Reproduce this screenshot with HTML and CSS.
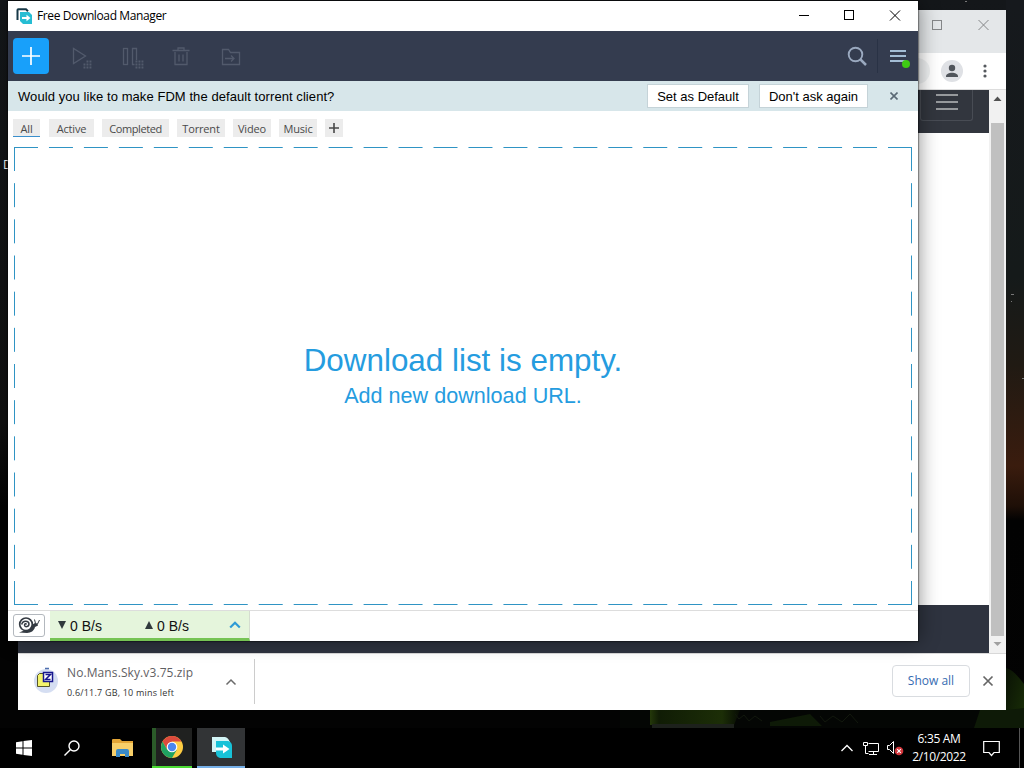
FILE: index.html
```html
<!DOCTYPE HTML>
<html lang="en">
<head>
	<meta charset="UTF-8">
	<title>Free Download Manager</title>
	<link rel="stylesheet" href="styles.css">
</head>
<body>
<div class="desktop">
	<span class="desktop-label">D</span>
	<svg class="wallpaper" width="1024" height="728" viewBox="0 0 1024 728">
		<defs>
			<linearGradient id="glow" x1="0" y1="0" x2="0" y2="1">
				<stop offset="0" stop-color="#16191d"/>
				<stop offset=".38" stop-color="#151a1a"/>
				<stop offset=".5" stop-color="#201a13"/>
				<stop offset=".64" stop-color="#3a1c0e"/>
				<stop offset=".695" stop-color="#1e0f07"/>
				<stop offset=".715" stop-color="#020202"/>
				<stop offset="1" stop-color="#030303"/>
			</linearGradient>
			<linearGradient id="grass" x1="0" y1="0" x2="1" y2="0">
				<stop offset="0" stop-color="#24380a"/>
				<stop offset=".1" stop-color="#101c05"/>
				<stop offset=".8" stop-color="#1c2e07"/>
				<stop offset="1" stop-color="#070c04"/>
			</linearGradient>
			<linearGradient id="leaf" x1="0" y1="0" x2="1" y2="1">
				<stop offset="0" stop-color="#0a1205"/>
				<stop offset="1" stop-color="#1a3007"/>
			</linearGradient>
		</defs>
		<rect x="1006" y="0" width="18" height="728" fill="url(#glow)"/>
		<path d="M1006 668q8 2 18 16v34l-18 10z" fill="url(#leaf)"/>
		<path d="M620 710h404v18H620z" fill="#040604"/>
		<path d="M650 710h90l-6 15h-84z" fill="url(#grass)"/>
		<path d="M652 724h82v4h-82z" fill="#1d211c"/>
		<path d="M770 722l40-8 12 12h-52zM980 710h26l18-2v20h-50z" fill="#0e1a07"/>
		<path d="M735 714l4 5 5-4 5 6 6-5 7 5M820 716l5 6 8-6 9 6 8-8 8 9" fill="none" stroke="#12180d"/>
		<g fill="#777">
			<rect x="1011" y="294" width="3" height="1"/>
			<rect x="1022" y="378" width="2" height="1"/>
			<rect x="1011" y="301" width="1" height="1"/>
			<rect x="965" y="1" width="2" height="1"/>
		</g>
	</svg>

	<div class="window browser">
		<div class="browser-title">
			<svg width="100" height="42" viewBox="0 0 100 42" fill="none" stroke="#858789">
				<rect x="26.500" y="10.500" width="9" height="9"/>
				<path d="M72.500 10l10 10M82.500 10l-10 10"/>
			</svg>
		</div>
		<div class="browser-bar">
			<span class="address-end"></span>
			<span class="avatar">
				<svg width="22" height="22" viewBox="0 0 22 22" fill="#50555b">
					<circle cx="11" cy="8" r="3.200"/>
					<path d="M5 16.500c0-5 12-5 12 0v.5H5z"/>
				</svg>
			</span>
			<svg width="6" height="16" viewBox="0 0 6 16" fill="#55595e">
				<circle cx="3" cy="3" r="1.600"/>
				<circle cx="3" cy="8" r="1.600"/>
				<circle cx="3" cy="13" r="1.600"/>
			</svg>
		</div>
		<div class="browser-body">
			<div class="site">
				<div class="site-header">
					<span class="site-toggle"><i></i><i></i><i></i></span>
				</div>
				<div class="site-content"></div>
				<div class="site-footer"></div>
			</div>
			<div class="scrollbar">
				<svg width="17" height="33" viewBox="0 0 17 33"><path d="M4.500 11h8l-4-4.500z" fill="#505050"/></svg>
				<div class="thumb"></div>
				<svg width="17" height="17" viewBox="0 0 17 17"><path d="M4.500 6h8l-4 4z" fill="#a0a0a0"/></svg>
			</div>
		</div>
		<div class="shelf">
			<div class="shelf-item">
				<svg width="28" height="28" viewBox="0 0 28 28">
					<circle cx="14" cy="15" r="12" fill="#d5def2"/>
					<path d="M13 2.500h4" stroke="#4f6fae" stroke-width="1.500"/>
					<path d="M5.500 20.500v-11l2-2h4l2 2h4v11z" fill="#f4f46c" stroke="#55552a"/>
					<rect x="11.500" y="6.500" width="9" height="9" fill="#fff" stroke="#16168e" stroke-width="1.500"/>
					<path d="M13.500 8.500h5l-5 5h5" fill="none" stroke="#16168e" stroke-width="1.500"/>
				</svg>
				<div class="file">
					<div class="file-name">No.Mans.Sky.v3.75.zip</div>
					<div class="file-status">0.6/11.7 GB, 10 mins left</div>
				</div>
				<svg class="file-menu" width="12" height="8" viewBox="0 0 12 8"><path d="M1.500 6.500L6 2l4.500 4.500" fill="none" stroke="#6b6b6b" stroke-width="1.500"/></svg>
			</div>
			<div class="shelf-right">
				<span class="show-all">Show all</span>
				<svg width="12" height="12" viewBox="0 0 12 12"><path d="M1.500 1.500l9 9M10.500 1.500l-9 9" stroke="#666" stroke-width="1.700"/></svg>
			</div>
		</div>
	</div>

	<div class="window fdm">
		<div class="fdm-title">
			<svg width="17" height="17" viewBox="0 0 17 17">
				<path d="M1.500 12V2q0-.800.800-.800H10l2 2" fill="none" stroke="#173847" stroke-width="2"/>
				<path d="M4 4h9l3 3v9H7l-3-3z" fill="#26bdd3"/>
				<path d="M6 10h6" stroke="#fff" stroke-width="2"/>
				<path d="M10.500 6.800l4 3.200-4 3.200z" fill="#fff"/>
			</svg>
			<span class="caption">Free Download Manager</span>
			<svg class="controls" width="120" height="30" viewBox="0 0 120 30" fill="none" stroke="#000">
				<path d="M1 14.500h10"/>
				<rect x="46.500" y="9.500" width="9" height="9"/>
				<path d="M92 9.500l10 10M102 9.500l-10 10"/>
			</svg>
		</div>
		<div class="toolbar">
			<span class="add"><svg width="18" height="18" viewBox="0 0 18 18"><path d="M9 0v18M0 9h18" stroke="#fff" stroke-width="1.700"/></svg></span>
			<svg class="tools" width="180" height="26" viewBox="0 0 180 26" fill="none" stroke="#525a6c" stroke-width="1.300">
				<path d="M4.500 4.500v15l12-7.500z"/>
				<path d="M17.500 17.500h6M14.500 20.500h9M14.500 23.500h9" stroke-width="1.900" stroke-dasharray="1.900 1.100"/>
				<rect x="54.500" y="4.500" width="4" height="16"/>
				<path d="M67.500 16V4.500h-4v16h2"/>
				<path d="M66.500 17.500h9M66.500 20.500h9M66.500 23.500h9" stroke-width="1.900" stroke-dasharray="1.900 1.100"/>
				<path d="M103.500 6.500h17M109 6V4h6v2M106 8v12.500h12V8M110 10.500v7M114 10.500v7"/>
				<path d="M153.500 20.500v-15h6l2 3h9v12zM156 14.500h9M162 11.500l3 3-3 3"/>
			</svg>
			<svg class="search" width="20" height="20" viewBox="0 0 20 20" fill="none" stroke="#9aa9bf">
				<circle cx="8.500" cy="8.500" r="6.800" stroke-width="1.900"/>
				<path d="M13 13l6 6" stroke-width="2.500"/>
			</svg>
			<span class="menu">
				<svg width="22" height="22" viewBox="0 0 22 22">
					<path d="M2 5h16M2 10h16M2 15h16" stroke="#a3bdd5" stroke-width="2"/>
					<circle cx="18" cy="18" r="4" fill="#3ecb14"/>
				</svg>
			</span>
		</div>
		<div class="notice">
			<span class="question">Would you like to make FDM the default torrent client?</span>
			<span class="button set-default">Set as Default</span>
			<span class="button dont-ask">Don't ask again</span>
			<svg width="8" height="8" viewBox="0 0 8 8"><path d="M.5.5l7 7M7.500.5l-7 7" stroke="#5b6a76" stroke-width="1.600"/></svg>
		</div>
		<div class="tabs">
			<span class="tab tab-all">All</span>
			<span class="tab tab-active">Active</span>
			<span class="tab tab-completed">Completed</span>
			<span class="tab tab-torrent">Torrent</span>
			<span class="tab tab-video">Video</span>
			<span class="tab tab-music">Music</span>
			<span class="tab tab-plus"><svg width="10" height="10" viewBox="0 0 10 10"><path d="M5 0v10M0 5h10" stroke="#484848" stroke-width="1.600"/></svg></span>
		</div>
		<div class="drop-zone">
			<svg class="dashes" width="898" height="458" viewBox="0 0 898 458" fill="none" stroke="#2f94c4">
				<path d="M0 .5h898M0 457.500h898" stroke-dasharray="24 10.960"/>
				<path d="M.5 0v458M897.500 0v458" stroke-dasharray="24 12.167"/>
			</svg>
			<div class="empty-title">Download list is empty.</div>
			<div class="empty-link">Add new download URL.</div>
		</div>
		<div class="status">
			<span class="snail">
				<svg width="22" height="17" viewBox="0 0 22 17" fill="none" stroke="#343a42">
					<circle cx="8" cy="7.300" r="6.300" stroke-width="1.700"/>
					<path d="M8.500 7.500c-.3-1.300-2-.8-2 .5 0 2.400 4.500 2.200 4.500-1 0-3.500-6.500-4-7.300.5" stroke-width="1.500"/>
					<path d="M1 15.500c2-.5 3.500-1.500 5-2 4 .5 7-1.500 8.500-6l2.500-1.500 2.500.5.5 2-3 1.500c-1 4-4 5.800-8 6z" fill="#343a42" stroke="none"/>
					<path d="M17.500 6.500l-1-4M19.500 7l2-4"/>
				</svg>
			</span>
			<div class="speed">
				<svg width="8" height="8" viewBox="0 0 8 8"><path d="M0 0h8L4 8z" fill="#30393c"/></svg>
				<span class="down">0 B/s</span>
				<svg width="8" height="8" viewBox="0 0 8 8"><path d="M0 8h8L4 0z" fill="#30393c"/></svg>
				<span class="up">0 B/s</span>
				<svg width="12" height="8" viewBox="0 0 12 8"><path d="M1.200 6.500L6 1.800l4.800 4.700" fill="none" stroke="#2e9bd6" stroke-width="2.200"/></svg>
			</div>
		</div>
	</div>

	<div class="taskbar">
		<span class="task start">
			<svg width="16" height="16" viewBox="0 0 16 16" fill="#fff"><path d="M0 2.200l6.500-.9v6.200H0zM7.500 1.100L16 0v7.500H7.500zM0 8.500h6.500v6.200L0 13.800zM7.500 8.500H16V16l-8.500-1.100z"/></svg>
		</span>
		<span class="task find">
			<svg width="16" height="16" viewBox="0 0 16 16" fill="none" stroke="#fff" stroke-width="1.400"><circle cx="10" cy="6" r="5"/><path d="M6.300 9.700L.5 15.500"/></svg>
		</span>
		<span class="task explorer">
			<svg width="22" height="18" viewBox="0 0 22 18">
				<path d="M0 16V1q0-1 1-1h7l2 2h11v14z" fill="#e3a536"/>
				<path d="M0 4h21v13H0z" fill="#f8cf69"/>
				<path d="M4 18v-6q0-2 2-2h9q2 0 2 2v6h-4v-3H8v3z" fill="#3a8ac8"/>
			</svg>
		</span>
		<span class="task chrome">
			<svg width="22" height="22" viewBox="0 0 22 22">
				<circle cx="11" cy="11" r="11" fill="#ffcd42"/>
				<path d="M1.500 5.500A11 11 0 0 1 20.500 5.500H11L6.200 13.700z" fill="#dc4a3d"/>
				<path d="M1.500 5.500A11 11 0 0 0 11 22l4.800-8.300H6.200z" fill="#1fa261"/>
				<circle cx="11" cy="11" r="5.300" fill="#fff"/>
				<circle cx="11" cy="11" r="4.200" fill="#4c86ee"/>
			</svg>
		</span>
		<span class="task fdm-task">
			<svg width="20" height="21" viewBox="0 0 20 21">
				<path d="M0 0h13q3 .5 5 5l-2 2H4v8H0z" fill="#d3f5f6"/>
				<path d="M4 4h12q4 1 4 5v12H8q-4-1-4-5z" fill="#18c2d8"/>
				<path d="M4 12h8" stroke="#fff" stroke-width="3"/>
				<path d="M11 7.500l6.500 4.500-6.500 4.500z" fill="#fff"/>
			</svg>
		</span>
		<div class="tray">
			<svg width="12" height="8" viewBox="0 0 12 8"><path d="M.5 7L6 1.500 11.500 7" fill="none" stroke="#fff" stroke-width="1.300"/></svg>
			<svg width="17" height="15" viewBox="0 0 17 15" fill="none" stroke="#fff"><path d="M5.500 2.500h10v8h-10M10.500 11v2.500M6 13.500h8"/><path d="M.5 1.500h4v3h-4zM2.500 5v7.500h3"/></svg>
			<svg class="volume" width="17" height="16" viewBox="0 0 17 16"><path d="M.5 5.500h2l4-4v12l-4-4h-2z" fill="none" stroke="#fff"/><circle cx="12" cy="11" r="4.300" fill="#d2363c"/><path d="M10.200 9.200l3.600 3.600M13.800 9.200l-3.600 3.600" stroke="#fff" stroke-width="1.100"/></svg>
			<div class="clock"><span>6:35 AM</span><span>2/10/2022</span></div>
			<svg class="notify" width="17" height="17" viewBox="0 0 17 17"><path d="M.7 1.500h15.600v11H11l-2.500 3-2.500-3H.7z" fill="none" stroke="#fff" stroke-width="1.200"/></svg>
			<i class="peek"></i>
		</div>
	</div>
</div>
</body>
</html>
```
FILE: styles.css
```css
* {
    box-sizing: border-box;
}
body {
    margin: 0;
    font-family: "Liberation Sans", Arial, sans-serif;
}
svg {
    display: block;
    flex: none;
}
.desktop {
    position: relative;
    width: 1024px;
    height: 768px;
    overflow: hidden;
    background: linear-gradient(#14171a, #111 55%, #030303 66%);
}
.wallpaper {
    position: absolute;
    top: 0;
    left: 0;
}
.desktop-label {
    position: absolute;
    left: 3px;
    top: 157px;
    color: #fff;
    font: 12px/15px "Open Sans", sans-serif;
}
.window {
    position: absolute;
    display: flex;
    flex-direction: column;
}

/* browser behind */
.browser {
    left: 18px;
    top: 10px;
    width: 988px;
    height: 700px;
    background: #fff;
}
.browser-title {
    display: flex;
    justify-content: flex-end;
    height: 43px;
    background: #e4e7e9;
}
.browser-bar {
    display: flex;
    align-items: center;
    justify-content: flex-end;
    height: 37px;
    padding-right: 18px;
    border-bottom: 1px solid #ddd;
}
.address-end {
    width: 40px;
    height: 26px;
    margin-right: 11px;
    border-radius: 13px;
    background: #f0f2f3;
}
.avatar {
    width: 22px;
    height: 22px;
    margin-right: 19px;
    border-radius: 50%;
    background: #dfe1e5;
}
.browser-body {
    display: flex;
    height: 563px;
}
.site {
    flex: 1;
    display: flex;
    flex-direction: column;
}
.site-header {
    display: flex;
    justify-content: flex-end;
    height: 43px;
    padding-right: 16px;
    background: #32363e;
}
.site-toggle {
    display: flex;
    flex-direction: column;
    align-items: center;
    gap: 5px;
    width: 53px;
    height: 31px;
    padding-top: 4px;
    border: 1px solid #484c54;
    border-top: 0;
    border-radius: 0 0 3px 3px;
}
.site-toggle i {
    width: 22px;
    height: 2px;
    background: #96999c;
}
.site-content {
    flex: 1;
}
.site-footer {
    height: 48px;
    background: #2e333f;
}
.scrollbar {
    display: flex;
    flex-direction: column;
    width: 17px;
    background: #f1f1f1;
}
.thumb {
    flex: 1;
    width: 13px;
    margin-left: 2px;
    background: #c0c0c0;
}
.shelf {
    display: flex;
    justify-content: space-between;
    height: 57px;
    border-top: 1px solid #d8d8d8;
}
.shelf-item {
    display: flex;
    align-items: flex-start;
    width: 237px;
    height: 45px;
    margin-top: 5px;
    padding: 7px 0 0 14px;
    border-right: 1px solid #ccc;
}
.file {
    width: 158px;
    margin-left: 7px;
    margin-top: -2px;
    font-family: "Open Sans", sans-serif;
    white-space: nowrap;
}
.file-name {
    color: #5f6063;
    font-size: 12px;
    line-height: 17px;
    letter-spacing: .1px;
}
.file-status {
    margin-top: 5px;
    color: #333;
    font-size: 9px;
    line-height: 14px;
    letter-spacing: .2px;
}
.file-menu {
    margin-top: 12px;
}
.shelf-right {
    display: flex;
    align-items: center;
    gap: 12px;
    height: 54px;
    padding-right: 12px;
}
.show-all {
    width: 78px;
    height: 32px;
    border: 1px solid #d9dce0;
    border-radius: 4px;
    color: #366bb1;
    font: 500 12px/30px "Open Sans", sans-serif;
    text-align: center;
}

/* download manager */
.fdm {
    left: 8px;
    top: 1px;
    width: 910px;
    height: 640px;
    background: #fff;
    box-shadow: 0 0 1px 1px rgba(0, 0, 0, .35), 2px 0 18px rgba(0, 0, 0, .4);
}
.fdm-title {
    display: flex;
    align-items: center;
    height: 30px;
    padding-left: 8px;
}
.caption {
    margin-left: 4px;
    font: 12px/16px "Open Sans", sans-serif;
    letter-spacing: -.38px;
    color: #000;
}
.controls {
    margin-left: auto;
}
.toolbar {
    display: flex;
    align-items: center;
    height: 50px;
    padding-left: 5px;
    background: #343c4f;
}
.add {
    display: flex;
    align-items: center;
    justify-content: center;
    width: 36px;
    height: 36px;
    border-radius: 4px;
    background: #18a0fa;
}
.tools {
    margin-left: 20px;
    margin-top: 2px;
}
.search {
    margin-left: auto;
    margin-right: 10px;
}
.menu {
    width: 41px;
    height: 34px;
    padding: 7px 0 0 10px;
    border-left: 1px solid #293245;
}
.notice {
    display: flex;
    align-items: center;
    height: 30px;
    padding: 0 20px 0 10px;
    background: #d7e6ea;
    font-size: 13px;
    color: #000;
}
.question {
    flex: 1;
    letter-spacing: .07px;
}
.button {
    height: 24px;
    border: 1px solid #c5d3d8;
    background: #fff;
    line-height: 23px;
    text-align: center;
}
.set-default {
    width: 102px;
    margin-right: 10px;
}
.dont-ask {
    width: 109px;
    margin-right: 22px;
}
.tabs {
    display: flex;
    height: 35px;
    padding: 8px 0 0 5px;
    font: 11px/19px "Open Sans", sans-serif;
    letter-spacing: -.15px;
    color: #4a4a4a;
}
.tab {
    height: 18px;
    background: #ececec;
    text-align: center;
}
.tab-all {
    width: 27px;
    margin-right: 9px;
    border-bottom: 1px solid #3a8fcc;
}
.tab-active {
    width: 45px;
    margin-right: 8px;
}
.tab-completed {
    width: 67px;
    margin-right: 8px;
    letter-spacing: -.4px;
}
.tab-torrent {
    width: 48px;
    margin-right: 8px;
}
.tab-video {
    width: 38px;
    margin-right: 8px;
}
.tab-music {
    width: 38px;
    margin-right: 8px;
}
.tab-plus {
    display: flex;
    align-items: center;
    justify-content: center;
    width: 18px;
}
.drop-zone {
    position: relative;
    width: 898px;
    height: 458px;
    margin-top: 1px;
    margin-left: 6px;
    padding-top: 196px;
    text-align: center;
    color: #259cdf;
}
.dashes {
    position: absolute;
    top: 0;
    left: 0;
}
.empty-title {
    font-size: 31.4px;
    line-height: 36px;
}
.empty-link {
    font-size: 21.6px;
    line-height: 34px;
}
.status {
    display: flex;
    height: 31px;
    margin-top: 5px;
    padding-left: 5px;
    border-top: 1px solid #ddd;
}
.snail {
    display: flex;
    align-items: center;
    justify-content: center;
    width: 32px;
    height: 23px;
    margin-top: 3px;
    margin-right: 5px;
    border: 1px solid #b3b8be;
    border-radius: 3px;
}
.speed {
    display: flex;
    align-items: center;
    width: 200px;
    height: 30px;
    padding-left: 8px;
    border-right: 1px solid #d5ddd0;
    border-bottom: 3px solid #76c454;
    background: #e5f5dc;
    color: #111;
    font-size: 14px;
}
.down,
.up {
    margin-left: 4px;
    padding-top: 2px;
}
.down {
    width: 75px;
}
.up {
    width: 72px;
}

/* taskbar */
.taskbar {
    position: absolute;
    left: 0;
    bottom: 0;
    display: flex;
    width: 1024px;
    height: 40px;
    background: #000;
}
.task {
    display: flex;
    align-items: center;
    justify-content: center;
    width: 48px;
}
.explorer {
    width: 53px;
    margin-right: 3px;
}
.chrome {
    width: 40px;
    margin-right: 5px;
    border-bottom: 2px solid #4cdc34;
    background: linear-gradient(90deg, #2b5b29 4px, #202120 4px);
}
.fdm-task {
    padding-left: 2px;
    border-bottom: 2px solid #76b0e8;
    background: #323436;
}
.tray {
    display: flex;
    align-items: center;
    margin-left: auto;
    color: #fff;
    font: 12px/18px "Open Sans", sans-serif;
}
.tray svg {
    margin-right: 10px;
}
.tray .volume {
    margin-left: -3px;
    margin-right: 6px;
}
.clock {
    display: flex;
    flex-direction: column;
    align-items: center;
    width: 58px;
    margin-right: 15px;
    letter-spacing: -.35px;
}
.tray .notify {
    margin-right: 19px;
}
.peek {
    width: 5px;
    height: 40px;
    border-left: 1px solid #555;
}
```
